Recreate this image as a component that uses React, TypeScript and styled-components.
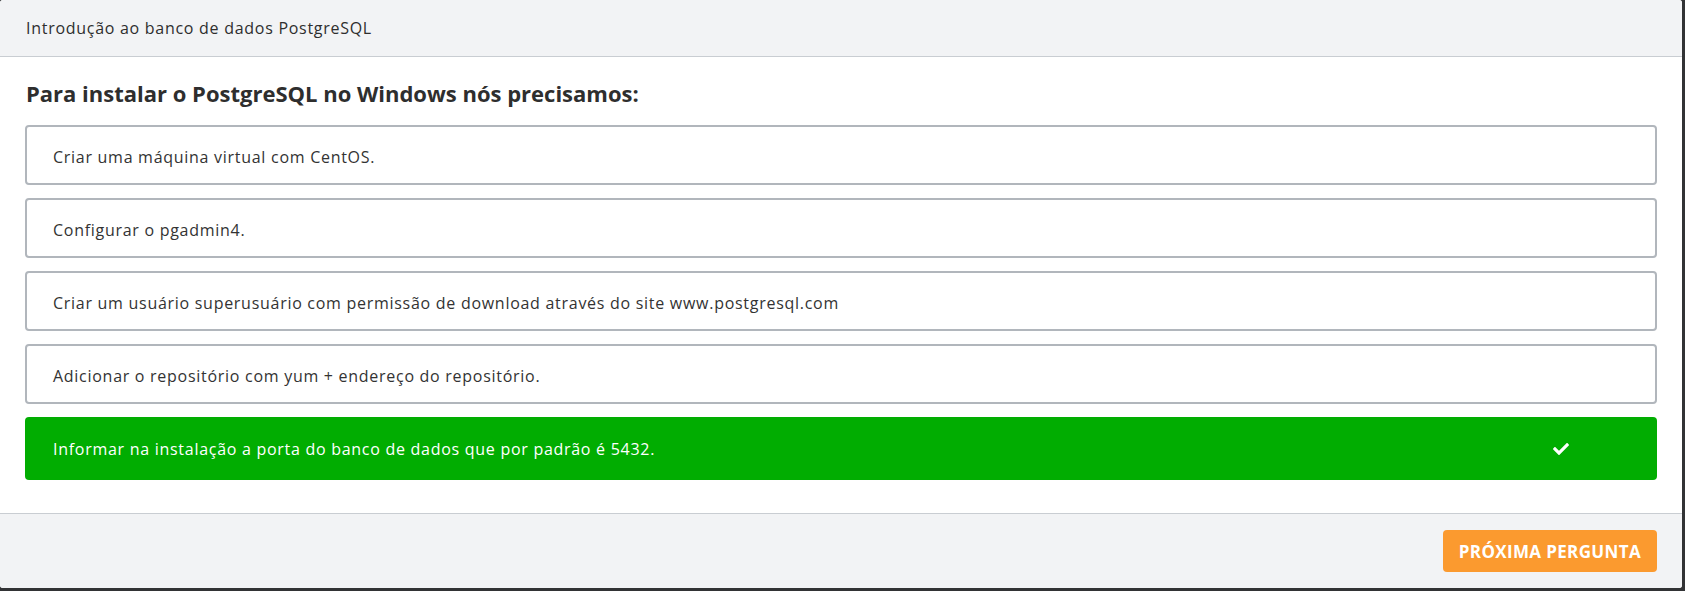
import React from "react";
import styled, { createGlobalStyle } from "styled-components";
import { FaCheck } from "react-icons/fa";

const GlobalStyle = createGlobalStyle`
  html, body {
    margin: 0;
    padding: 0;
    background: #323335;
  }
  body {
    font-family: "Open Sans", "Noto Sans", "Liberation Sans", sans-serif;
    color: #333;
  }
  * { box-sizing: border-box; }
`;

const Modal = styled.div`
  width: 1682px;
  height: 588px;
  background: #ffffff;
  border-radius: 3px;
  overflow: hidden;
  display: flex;
  flex-direction: column;
`;

const Header = styled.header`
  background: #f2f3f5;
  border-bottom: 1px solid #c9cdd2;
  padding: 16px 26px;
  font-size: 16px;
  line-height: 24px;
  letter-spacing: 0.72px;
  color: #2e2e2e;
`;

const Body = styled.main`
  flex: 1;
  padding: 21px 25px 0 25px;
  display: flex;
  flex-direction: column;
`;

const Question = styled.h2`
  margin: 0 0 17px 1px;
  font-size: 22px;
  line-height: 30px;
  font-weight: 700;
  color: #2e2e2e;
`;

const Options = styled.div`
  display: flex;
  flex-direction: column;
  gap: 13px;
`;

const Option = styled.div<{ $correct?: boolean }>`
  display: flex;
  align-items: center;
  justify-content: space-between;
  font-size: 16px;
  line-height: 24px;
  letter-spacing: 0.72px;
  border-radius: 4px;
  ${(p) =>
    p.$correct
      ? `
    background: #01ad01;
    color: #ffffff;
    font-weight: 400;
    padding: 20px 88px 19px 28px;
    border: none;
  `
      : `
    background: #ffffff;
    color: #333;
    padding: 18px 26px 14px 26px;
    border: 2px solid #b1b6bc;
  `}
`;

const Footer = styled.footer`
  background: #f2f3f5;
  border-top: 1px solid #c9cdd2;
  padding: 16px 25px 16px 25px;
  display: flex;
  justify-content: flex-end;
`;

const NextButton = styled.button`
  height: 42px;
  padding: 0 16px;
  background: #fb9a2f;
  color: #ffffff;
  border: none;
  border-radius: 4px;
  font-family: "Open Sans", "Noto Sans", sans-serif;
  font-size: 17px;
  font-weight: 700;
  letter-spacing: 0.35px;
  cursor: pointer;
`;

const options = [
  { text: "Criar uma máquina virtual com CentOS.", correct: false },
  { text: "Configurar o pgadmin4.", correct: false },
  {
    text: "Criar um usuário superusuário com permissão de download através do site www.postgresql.com",
    correct: false,
  },
  { text: "Adicionar o repositório com yum + endereço do repositório.", correct: false },
  { text: "Informar na instalação a porta do banco de dados que por padrão é 5432.", correct: true },
];

export default function App() {
  return (
    <>
      <GlobalStyle />
      <Modal>
        <Header>Introdução ao banco de dados PostgreSQL</Header>
        <Body>
          <Question>Para instalar o PostgreSQL no Windows nós precisamos:</Question>
          <Options>
            {options.map((o) => (
              <Option key={o.text} $correct={o.correct}>
                <span>{o.text}</span>
                {o.correct && <FaCheck size={16} />}
              </Option>
            ))}
          </Options>
        </Body>
        <Footer>
          <NextButton>PRÓXIMA PERGUNTA</NextButton>
        </Footer>
      </Modal>
    </>
  );
}
